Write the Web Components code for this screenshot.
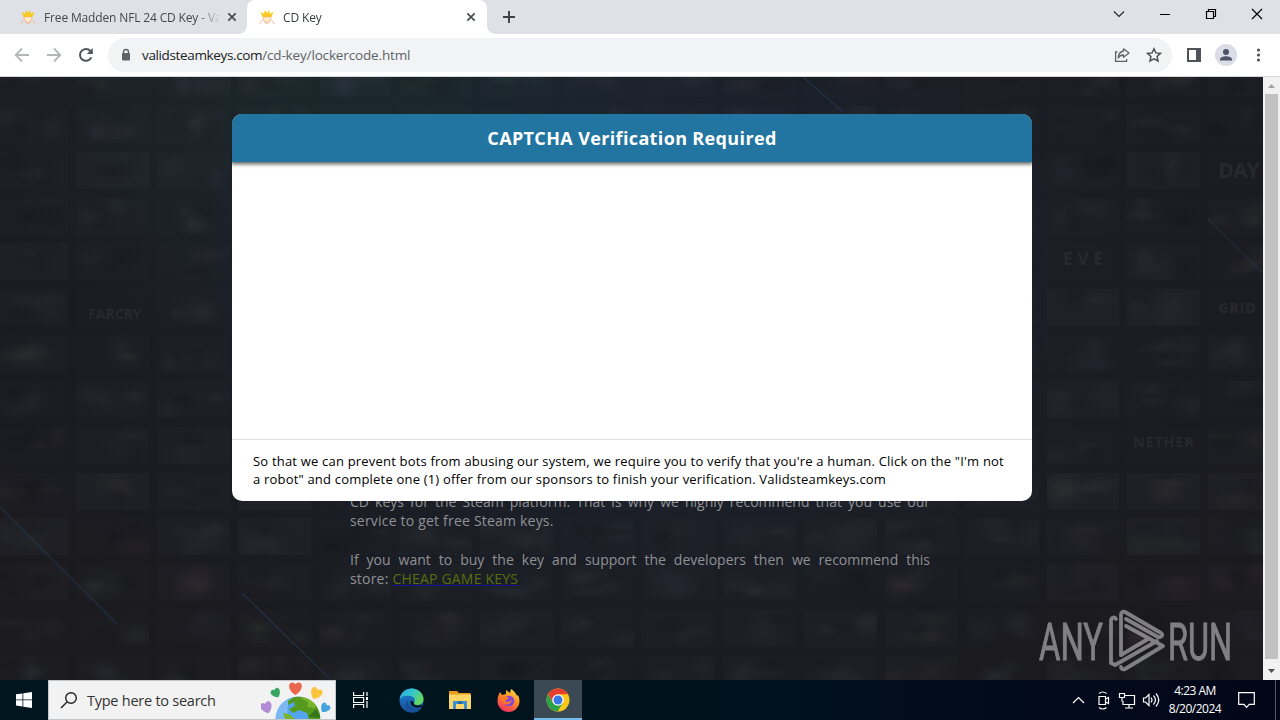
<!DOCTYPE html>
<html lang="en">
<head>
<meta charset="utf-8">
<title>CD Key</title>
<style>
  body {
    margin: 0;
    width: 1280px;
    height: 720px;
    overflow: hidden;
    font-family: "Open Sans", "Noto Sans", sans-serif;
  }
</style>
</head>
<body>
<desktop-screen>
  <tab-strip slot="tabs">
    <browser-tab>Free Madden NFL 24 CD Key - Va</browser-tab>
    <browser-tab active>CD Key</browser-tab>
  </tab-strip>
  <browser-toolbar slot="toolbar">
    <span slot="host">validsteamkeys.com</span><span slot="path">/cd-key/lockercode.html</span>
  </browser-toolbar>
  <page-view slot="page">
    <captcha-modal slot="modal">
      <span slot="title">CAPTCHA Verification Required</span>
      <div>So that we can prevent bots from abusing our system, we require you to verify that you're a human. Click on the "I'm not</div>
      <div>a robot" and complete one (1) offer from our sponsors to finish your verification. Validsteamkeys.com</div>
    </captcha-modal>
    <page-article></page-article>
  </page-view>
  <task-bar slot="taskbar"></task-bar>
</desktop-screen>

<script>
class BaseElement extends HTMLElement {
  constructor() {
    super();
    this.shadowDOM = this.attachShadow({ mode: 'open' });
  }

  connectedCallback() {
    this.render();
  }
}

class DesktopScreen extends BaseElement {
  render() {
    this.shadowDOM.innerHTML = `
      <style>
        :host {
          display: grid;
          grid-template-rows: 34px 43px 603px 40px;
          width: 1280px;
          height: 720px;
        }
      </style>
      <slot name="tabs"></slot>
      <slot name="toolbar"></slot>
      <slot name="page"></slot>
      <slot name="taskbar"></slot>
    `;
  }
}

class TabStrip extends BaseElement {
  render() {
    this.shadowDOM.innerHTML = `
      <style>
        * { box-sizing: border-box; }
        :host {
          display: flex;
          align-items: flex-end;
          padding-left: 8px;
          background: #dee1e6;
        }
        .plus { margin: 0 0 10px 15px; }
        .window { display: flex; margin-left: auto; height: 34px; align-items: center; }
        .window svg { display: block; width: 46px; height: 34px; }
        svg { display: block; }
      </style>
      <slot></slot>
      <svg class="plus" width="14" height="14" viewBox="0 0 14 14"><path d="M7 1v12M1 7h12" stroke="#3c4043" stroke-width="1.9"/></svg>
      <div class="window">
        <svg viewBox="0 0 46 34"><path d="M18 11.5l5 5 5-5" fill="none" stroke="#222" stroke-width="1.1"/></svg>
        <svg viewBox="0 0 46 34"><path d="M18 14.5h10" stroke="#000"/></svg>
        <svg viewBox="0 0 46 34"><path d="M18.500 11.500h7v7h-7zM20.500 11.500v-2h7v7h-2" fill="none" stroke="#000" stroke-width="1.2"/></svg>
        <svg viewBox="0 0 46 34"><path d="M18 9l10 10M28 9L18 19" stroke="#000" stroke-width="1.2"/></svg>
      </div>
    `;
  }
}

class BrowserTab extends BaseElement {
  render() {
    this.shadowDOM.innerHTML = `
      <style>
        * { box-sizing: border-box; }
        :host {
          display: flex;
          align-items: center;
          position: relative;
          box-sizing: border-box;
          width: 239px;
          height: 34px;
          padding: 0 10px 0 12px;
          font-size: 12px;
          letter-spacing: -0.15px;
          color: #45494d;
        }
        :host([active]) {
          width: 240px;
          padding-right: 11px;
          background: #fff;
          border-radius: 8px 8px 0 0;
          color: #3c4043;
        }
        :host([active])::before, :host([active])::after {
          content: "";
          position: absolute;
          bottom: 0;
          left: -8px;
          width: 8px;
          height: 8px;
          background: radial-gradient(circle at 0 0, transparent 7.5px, #fff 8px);
        }
        :host([active])::after {
          left: 100%;
          background: radial-gradient(circle at 100% 0, transparent 7.5px, #fff 8px);
        }
        .title {
          flex: 1;
          margin: 0 8px;
          overflow: hidden;
          white-space: nowrap;
          -webkit-mask: linear-gradient(90deg, #000 152px, transparent 178px);
        }
        svg { flex: none; }
      </style>
      <svg width="16" height="16" viewBox="0 0 16 16">
        <path d="M3.500 8L1.500 2.500 5 5l1-4 2 3 2-3 1 4 3.500-2.500-2 5.500z" fill="#fbc91f"/>
        <path d="M4 8c0 3 2 5 4 5s4-2 4-5z" fill="#fdeed2" stroke="#f3b27a" stroke-width=".7"/>
        <path d="M5 11c-2 0-3.500 1.500-4 4M11 11c2 0 3.500 1.500 4 4M5 13l3 1.500 3-1.500" fill="none" stroke="#f2b89a"/>
      </svg>
      <div class="title"><slot></slot></div>
      <svg width="10" height="10" viewBox="0 0 10 10"><path d="M1.300 1.300l7.400 7.400M8.700 1.300L1.300 8.700" stroke="#484c50" stroke-width="1.7"/></svg>
    `;
  }
}

class BrowserToolbar extends BaseElement {
  render() {
    this.shadowDOM.innerHTML = `
      <style>
        * { box-sizing: border-box; }
        :host {
          display: flex;
          align-items: center;
          box-sizing: border-box;
          padding: 0 14px;
          background: #fff;
          border-bottom: 1px solid #d5d7da;
        }
        svg { display: block; flex: none; }
        .nav { display: flex; gap: 16px; width: 94px; }
        .omnibox {
          display: flex;
          align-items: center;
          width: 1064px;
          height: 34px;
          padding: 0 10px 0 12px;
          border-radius: 17px;
          background: #f1f3f4;
          font-size: 13.500px;
          color: #5f6368;
        }
        .url { flex: 1; margin-left: 10px; white-space: nowrap; letter-spacing: -0.15px; }
        .host { color: #202124; letter-spacing: -0.36px; }
        .actions { display: flex; gap: 16px; }
        .right { display: flex; align-items: center; gap: 13px; margin-left: 14px; }
        .avatar { margin-right: 4px; }
      </style>
      <div class="nav">
        <svg width="16" height="16" viewBox="0 0 16 16"><path d="M15 8H2M8 1.500L1.700 8 8 14.500" fill="none" stroke="#b4b6b9" stroke-width="1.800"/></svg>
        <svg width="16" height="16" viewBox="0 0 16 16"><path d="M1 8h13M8 1.500L14.300 8 8 14.500" fill="none" stroke="#b4b6b9" stroke-width="1.800"/></svg>
        <svg width="16" height="16" viewBox="0 0 16 16"><path d="M13.300 10.300A5.900 5.900 0 1 1 12.300 4" fill="none" stroke="#50545a" stroke-width="2"/><path d="M14.800 1v6H8.800z" fill="#50545a"/></svg>
      </div>
      <div class="omnibox">
        <svg width="12" height="14" viewBox="0 0 12 14"><path d="M3.500 6V4a2.500 2.500 0 0 1 5 0v2" fill="none" stroke="#5f6368" stroke-width="1.400"/><rect x="2" y="5" width="8" height="7.500" rx="1" fill="#5f6368"/></svg>
        <div class="url"><span class="host"><slot name="host"></slot></span><slot name="path"></slot></div>
        <div class="actions">
          <svg width="16" height="16" viewBox="0 0 16 16"><path d="M3.500 5H1.600v9.400h11V12" fill="none" stroke="#5f6368" stroke-width="1.300"/><path d="M9.500 1.800L15 6l-5.500 4.300V8C7 8 5.300 9 4.200 11 4.500 7 6.300 4.500 9.500 4z" fill="none" stroke="#5f6368" stroke-width="1.300" stroke-linejoin="round"/></svg>
          <svg width="16" height="16" viewBox="0 0 16 16"><path d="M8 1.800l1.900 4.100 4.500.5-3.300 3.100.9 4.500L8 11.800 4 14l.9-4.500L1.600 6.400l4.500-.5z" fill="none" stroke="#50545a" stroke-width="1.500"/></svg>
        </div>
      </div>
      <div class="right">
        <svg width="16" height="16" viewBox="0 0 16 16"><path d="M1 1h14v14H1z" fill="#50545a"/><path d="M3 3h7v10H3z" fill="#fff"/></svg>
        <svg class="avatar" width="22" height="22" viewBox="0 0 22 22"><circle cx="11" cy="11" r="11" fill="#dadce6"/><circle cx="11" cy="8" r="3" fill="#4d5368"/><path d="M5 16.500v-1.200c0-2 3.500-3.100 6-3.100s6 1.100 6 3.100v1.200z" fill="#4d5368"/></svg>
        <svg width="8" height="16" viewBox="0 0 8 16"><g fill="#50545a"><circle cx="4.500" cy="3" r="1.600"/><circle cx="4.500" cy="8" r="1.600"/><circle cx="4.500" cy="13" r="1.600"/></g></svg>
      </div>
    `;
  }
}

class PageView extends BaseElement {
  render() {
    this.shadowDOM.innerHTML = `
      <style>
        :host {
          display: flex;
          position: relative;
          overflow: hidden;
          background: #1b1b20;
        }
        .content { width: 1263px; position: relative; overflow: hidden; }
        tile-wall { position: absolute; inset: 0; }
        .article { position: relative; }
        .modal { position: absolute; left: 232px; top: 37px; }
        .watermark { position: absolute; left: 1037px; top: 532px; }
        .bar {
          display: flex;
          flex-direction: column;
          align-items: center;
          width: 17px;
          background: #f1f1f1;
        }
        .bar svg { display: block; flex: none; }
        .thumb { flex: 1; width: 13px; margin-bottom: 4px; background: #c1c1c1; }
      </style>
      <div class="content">
        <tile-wall></tile-wall>
        <div class="article"><slot></slot></div>
        <div class="modal"><slot name="modal"></slot></div>
        <run-mark class="watermark"></run-mark>
      </div>
      <div class="bar">
        <svg width="17" height="17" viewBox="0 0 17 17"><path d="M5 11l3.500-4 3.500 4z" fill="#a3a3a3"/></svg>
        <div class="thumb"></div>
        <svg width="17" height="17" viewBox="0 0 17 17"><path d="M5 6l3.500 4L12 6z" fill="#505050"/></svg>
      </div>
    `;
  }
}

// faint names that can still be read on the wall, keyed by row-column
const TILE_NAMES = {
  '5-1': 'FARCRY',
  '4-13': 'EVE',
  '5-15': 'GRID',
  '2-15': 'DAY',
  '8-14': 'NETHER'
};

class TileWall extends BaseElement {
  render() {
    let seed = 11;
    const random = () => {
      seed = (seed * 16807) % 2147483647;
      return seed / 2147483647;
    };
    const lit = ['4-0', '2-1', '5-13', '5-14', '2-14', '9-1', '9-13', '9-14', '10-3', '11-13', '10-14', '9-15', '10-0', '9-3'];
    let tiles = '';
    for (let row = 0; row < 14; row++) {
      for (let col = 0; col < 16; col++) {
        const key = `${row}-${col}`;
        const name = TILE_NAMES[key];
        const alpha = name ? 0.004 : lit.includes(key) ? 0.022 : 0.004 + random() * 0.010;
        const hue = Math.floor(random() * 360);
        // a few soft marks stand for the artwork of each cover
        let marks = '';
        if (!name) {
          for (let i = 0; i < 4; i++) {
            const x = (12 + random() * 76).toFixed();
            const y = (20 + random() * 60).toFixed();
            const w = (10 + random() * 20).toFixed();
            const h = (5 + random() * 14).toFixed();
            const ink = random() > 0.4 ? `hsla(${hue},22%,60%,.045)` : 'rgba(8,8,12,.12)';
            marks += `radial-gradient(ellipse ${w}px ${h}px at ${x}% ${y}%, ${ink}, transparent), `;
          }
        }
        const style = `background: ${marks}linear-gradient(rgba(200,210,220,${alpha.toFixed(3)}), rgba(200,210,220,${alpha.toFixed(3)}))`;
        tiles += `<div class="tile${col === 15 ? ' last' : ''} ${name || ''}" style="${style}">${name || ''}</div>`;
      }
    }
    this.shadowDOM.innerHTML = `
      <style>
        :host {
          display: block;
          overflow: hidden;
          background:
            radial-gradient(ellipse 420px 260px at 330px 0, rgba(28,52,54,.4), transparent),
            radial-gradient(ellipse 560px 500px at 640px 200px, rgba(26,38,54,.5), transparent),
            radial-gradient(ellipse 1100px 520px at 620px 160px, rgba(26,33,44,.55), transparent),
            #1b1a1e;
        }
        .wall {
          display: grid;
          grid-template-columns: repeat(16, 72.900px);
          grid-auto-rows: 37px;
          gap: 8.850px 8px;
          margin: -17px 0 0 -5px;
        }
        .tile {
          display: flex;
          align-items: center;
          justify-content: center;
          box-sizing: border-box;
          font: bold 14px "Open Sans", sans-serif;
          color: rgba(150,160,170,.11);
        }
        .last { justify-content: flex-start; padding-left: 10px; }
        .DAY { font-size: 21px; letter-spacing: -1px; }
        .EVE { font-size: 17px; letter-spacing: 5px; padding: 0 0 6px 5px; }
        .GRID { letter-spacing: 1px; }
        .FARCRY { padding: 12px 0 0 5px; }
        .NETHER { padding-bottom: 8px; letter-spacing: 1px; }
        svg { position: absolute; inset: 0; }
      </style>
      <div class="wall">${tiles}</div>
      <svg width="1263" height="603" viewBox="0 0 1263 603" fill="none" stroke="#2b4468" stroke-width="1.300" stroke-opacity=".45">
        <path d="M0 430L117 547M242 516L330 602M803 0l40 35"/>
        <path d="M1208 142l55 54" stroke-opacity=".3"/>
      </svg>
    `;
  }
}

class PageArticle extends BaseElement {
  render() {
    this.shadowDOM.innerHTML = `
      <style>
        :host {
          display: block;
          width: 580px;
          padding: 415px 0 0 350px;
          font-size: 14px;
          line-height: 19px;
          color: #909195;
        }
        .block { margin-bottom: 20px; white-space: nowrap; }
        .full { text-align: justify; text-align-last: justify; white-space: normal; }
        .tail { letter-spacing: 0.2px; }
        a { color: #55700f; background: linear-gradient(#15159c, #15159c) 0 16px / 100% 1px no-repeat; }
      </style>
      <div class="block">
        <div class="full">CD keys for the Steam platform. That is why we highly recommend that you use our</div>
        <div class="tail">service to get free Steam keys.</div>
      </div>
      <div class="block">
        <div class="full">If you want to buy the key and support the developers then we recommend this</div>
        <div class="tail">store: <a>CHEAP GAME KEYS</a></div>
      </div>
    `;
  }
}

class CaptchaModal extends BaseElement {
  render() {
    this.shadowDOM.innerHTML = `
      <style>
        * { box-sizing: border-box; }
        :host {
          display: flex;
          flex-direction: column;
          width: 800px;
          height: 387px;
          overflow: hidden;
          border-radius: 10px;
          background: #fff;
        }
        header {
          display: flex;
          align-items: center;
          justify-content: center;
          height: 48px;
          background: #2275a1;
          box-shadow: 0 1px 4px 1px rgba(0, 0, 0, .65);
          color: #fff;
          font-size: 18px;
          font-weight: 700;
          letter-spacing: 0.36px;
        }
        main { flex: 1; }
        footer {
          height: 62px;
          padding: 12px 20px 0 21px;
          border-top: 1px solid #dee2e6;
          color: #000;
          font-size: 13px;
          line-height: 18px;
          letter-spacing: 0.195px;
          white-space: nowrap;
        }
      </style>
      <header><slot name="title"></slot></header>
      <main></main>
      <footer><slot></slot></footer>
    `;
  }
}

class RunMark extends BaseElement {
  render() {
    this.shadowDOM.innerHTML = `
      <style>
        :host { display: block; opacity: .52; }
        svg { display: block; overflow: visible; }
        text { font: 51px "Roboto", sans-serif; fill: #dcdce0; stroke: #dcdce0; stroke-width: .9; }
      </style>
      <svg width="210" height="68" viewBox="0 0 210 68">
        <text x="2" y="51" textLength="64" lengthAdjust="spacingAndGlyphs">ANY</text>
        <g fill="none" stroke="#dcdce0" stroke-width="3.800" stroke-linecap="round" stroke-linejoin="round">
          <path d="M79 10c-2-3-5-1-5 2v42l4 2 42-24"/>
          <path d="M84 46V6c0-3 2-4 4-3l36 21c3 2 0 5-3 4L89 10"/>
          <path d="M89 17l37 20-38 23c-2 1-4 0-4-2M84 46l27-16"/>
        </g>
        <text x="131" y="51" textLength="64" lengthAdjust="spacingAndGlyphs">RUN</text>
      </svg>
    `;
  }
}

class TaskBar extends BaseElement {
  render() {
    this.shadowDOM.innerHTML = `
      <style>
        * { box-sizing: border-box; }
        :host {
          display: flex;
          background: linear-gradient(90deg, #01161f, #00131d 55%, #020a1c 80%, #020718);
          color: #fff;
        }
        svg { display: block; flex: none; }
        .start, .app { display: flex; align-items: center; justify-content: center; width: 48px; }
        .app { width: 49px; }
        .app.active { width: 48px; background: #3a4953; border-bottom: 2px solid #76b9ed; padding-top: 2px; }
        .search {
          display: flex;
          align-items: center;
          width: 288px;
          padding-left: 11px;
          background: #f2f2f2;
          border: 1px solid #c4c7c9;
          color: #333;
          font-size: 14.500px;
        }
        .search span { margin-left: 9px; width: 174px; white-space: nowrap; letter-spacing: -0.25px; }
        .tray { display: flex; align-items: center; margin-left: auto; }
        .icons { margin-right: -3px; }
        .clock {
          display: flex;
          flex-direction: column;
          align-items: center;
          width: 68px;
          margin-right: 2px;
          font-size: 12px;
          line-height: 18px;
          letter-spacing: -0.5px;
          white-space: nowrap;
        }
        .notes { margin-left: 7px; }
        .edge { width: 1px; height: 40px; margin-left: 20px; margin-right: 4px; background: #525966; }
      </style>
      <div class="start">
        <svg width="16" height="16" viewBox="0 0 16 16"><path d="M0 2.300l6.500-.9v6.100H0zM7.300 1.300L16 0v7.500H7.300zM0 8.300h6.500v6.200L0 13.600zM7.300 8.300H16V16l-8.700-1.300z" fill="#fff"/></svg>
      </div>
      <div class="search">
        <svg width="18" height="18" viewBox="0 0 18 18"><circle cx="11" cy="7" r="5.300" fill="none" stroke="#222" stroke-width="1.400"/><path d="M7 11L1 17" stroke="#222" stroke-width="1.500"/></svg>
        <span>Type here to search</span>
        <svg width="72" height="38" viewBox="0 0 72 38">
          <defs>
            <clipPath id="globe"><circle cx="37" cy="38" r="22.500"/></clipPath>
            <path id="heart" d="M0 5.500C-7 1-6-5-2.700-5-1-5 0-3.500 0-3.500S1-5 2.700-5C6-5 7 1 0 5.500z"/>
          </defs>
          <g clip-path="url(#globe)">
            <circle cx="37" cy="38" r="22.500" fill="#52a5ee"/>
            <path d="M14 36c3-12 9-19 18-20l-5 7-1 15H14z" fill="#7bb8f4"/>
            <path d="M27 20c7-6 15-6 22-3l10 11v10H48l-2-6-8-3-6 3-4-4 6-3-1-4-6 3z" fill="#56991f"/>
            <path d="M39 17l8 4-1 5 8 1 1-6-7-6zM22 32l6 1 6 5H24z" fill="#78b52d"/>
            <path d="M47 36l8-8 5 9z" fill="#34771a"/>
          </g>
          <use href="#heart" transform="translate(34.500 7.500) scale(1.200)" fill="#ea674e"/>
          <use href="#heart" transform="translate(15 12) rotate(-28) scale(.9)" fill="#38a563"/>
          <use href="#heart" transform="translate(5.500 26.500) rotate(-20) scale(1.100)" fill="#b18bd6"/>
          <use href="#heart" transform="translate(55 12.500) rotate(25) scale(1.100)" fill="#fbc43c"/>
          <use href="#heart" transform="translate(64 27) rotate(35) scale(.9)" fill="#45a3dd"/>
        </svg>
      </div>
      <div class="app">
        <svg width="16" height="16" viewBox="0 0 16 16" fill="none" stroke="#fff" stroke-width="1.200"><path d="M.6 0v3.500h10V0M.6 16v-3.500h10V16M.6 5.500h10v5H.6zM14 0v4M14 9v7"/><path d="M13 5h2v3h-2z" fill="#fff" stroke="none"/></svg>
      </div>
      <div class="app" style="width: 52px">
        <svg width="25" height="25" viewBox="0 0 25 25">
          <defs>
            <linearGradient id="eg" x2="1" y2=".5"><stop stop-color="#28a7dc"/><stop offset=".55" stop-color="#37c6ca"/><stop offset="1" stop-color="#64d85a"/></linearGradient>
            <linearGradient id="eb" x2="0" y2="1"><stop stop-color="#1c83d5"/><stop offset="1" stop-color="#174f98"/></linearGradient>
          </defs>
          <circle cx="12.500" cy="12.500" r="12" fill="url(#eb)"/>
          <path d="M.7 11C2 4 7 .5 12.500.5 20 .5 24.500 6 24.500 11c0 4-3 6-6 6-4 0-4-2-3-3 1-2 0-5-4-6C7 7 3 8 .7 11z" fill="url(#eg)"/>
          <path d="M9 12c-1 5 3 9 8 9 3 0 5-1 6-2-2 4-6 6-10 5.500C6 22 5 15 9 12z" fill="#155096"/>
          <path d="M12 12.500c-2 3 2 8 8 7l3-1-1-2c-3 2-8 1-7-2z" fill="#021721"/>
        </svg>
      </div>
      <div class="app" style="width: 45px">
        <svg width="22" height="20" viewBox="0 0 22 20"><path d="M0 1h8l2 2h11.500v5H0z" fill="#e69b1e"/><path d="M0 4.500h22V19H0z" fill="#fbd566"/><path d="M4 11h14v8H4z" fill="#3c8fd0"/><path d="M7 14h8v5H7z" fill="#fbd566"/><path d="M9 11h4v3H9z" fill="#276aa8"/></svg>
      </div>
      <div class="app" style="width: 52px; padding-left: 1px">
        <svg width="24" height="24" viewBox="0 0 24 24">
          <defs><linearGradient id="fx" x1=".8" y1="0" x2=".3" y2="1"><stop stop-color="#ffe14a"/><stop offset=".45" stop-color="#ff8a22"/><stop offset="1" stop-color="#f22d68"/></linearGradient></defs>
          <path d="M2 6l1-2 2 3 4-1V2l4 3 1-4c3 2 5 4 6 7l1-1c1 2 1.500 4 1.500 6A11 11 0 0 1 .5 13C.5 10 1 8 2 6z" fill="url(#fx)"/>
          <circle cx="12" cy="13" r="5.300" fill="#8547d8"/>
          <path d="M4 9c4-2 6 0 8 1-1 2-3 1-4 3 2 2 5 1 7-2-1 7-9 8-11-2z" fill="#ff7c24"/>
        </svg>
      </div>
      <div class="app active">
        <svg width="24" height="24" viewBox="0 0 24 24">
          <circle cx="12" cy="12" r="11.500" fill="#fbc719"/>
          <path d="M2 6.300A11.500 11.500 0 0 1 22 6.300H12L7 15z" fill="#e63f32"/>
          <path d="M2 6.300A11.500 11.500 0 0 0 11.500 23.500L17 14.800 12 17 7 15z" fill="#2ba14b"/>
          <circle cx="12" cy="12" r="5.800" fill="#fff"/><circle cx="12" cy="12" r="4.500" fill="#3879e8"/>
        </svg>
      </div>
      <div class="tray">
        <svg class="icons" width="97" height="40" viewBox="0 0 97 40" fill="none" stroke="#fff" stroke-width="1.200">
          <path d="M6 23l5.500-5.500L17 23"/>
          <path d="M32 16.500h6.500v8H32zM38.500 19l3-1.500v6l-3-1.500M32 13.500c2.500-2 5-2 7.500 0M32 27.500c2.500 2 5 2 7.500 0"/>
          <path d="M58 15.500h9.500v9H56V21M62 25v3M58 28h8M52.500 13.500h5v4h-5zM55 17.500v4"/>
          <path d="M76.500 18v4h2l3.500 3.500v-11L78.500 18zM84 17.500q2 2.500 0 5M86.500 15.500q4 4.500 0 9M89 13.500q5.500 6.500 0 13"/>
        </svg>
        <div class="clock"><span>4:23 AM</span><span>8/20/2024</span></div>
        <svg class="notes" width="17" height="18" viewBox="0 0 17 18"><path d="M.7 1.700h15.600v11.600h-5L8.500 16.300l-2.500-3H.7z" fill="none" stroke="#fff" stroke-width="1.200"/></svg>
        <div class="edge"></div>
      </div>
    `;
  }
}

customElements.define('desktop-screen', DesktopScreen);
customElements.define('tab-strip', TabStrip);
customElements.define('browser-tab', BrowserTab);
customElements.define('browser-toolbar', BrowserToolbar);
customElements.define('tile-wall', TileWall);
customElements.define('run-mark', RunMark);
customElements.define('page-view', PageView);
customElements.define('page-article', PageArticle);
customElements.define('captcha-modal', CaptchaModal);
customElements.define('task-bar', TaskBar);
</script>
</body>
</html>
